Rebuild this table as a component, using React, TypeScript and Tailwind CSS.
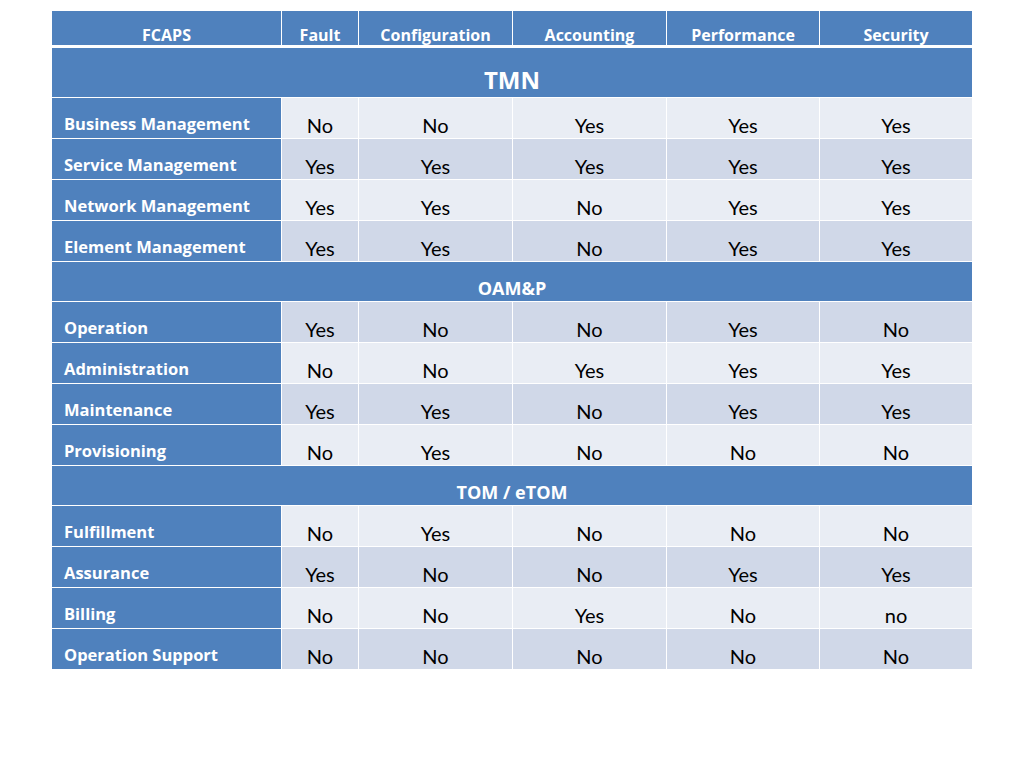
import React from "react";

const cols = ["w-[229px]", "w-[77px]", "w-[154px]", "w-[154px]", "w-[153px]", "w-[153px]"];

type Row = { label: string; vals: string[]; dark: boolean };

const sections: { title: string; titleCls: string; bandCls: string; rows: Row[] }[] = [
  {
    title: "TMN",
    titleCls: "text-[24px] pt-[15px]",
    bandCls: "h-[49px]",
    rows: [
      { label: "Business Management", vals: ["No", "No", "Yes", "Yes", "Yes"], dark: false },
      { label: "Service Management", vals: ["Yes", "Yes", "Yes", "Yes", "Yes"], dark: true },
      { label: "Network Management", vals: ["Yes", "Yes", "No", "Yes", "Yes"], dark: false },
      { label: "Element Management", vals: ["Yes", "Yes", "No", "Yes", "Yes"], dark: true },
    ],
  },
  {
    title: "OAM&P",
    titleCls: "text-[18px] pt-[13px]",
    bandCls: "h-[40px]",
    rows: [
      { label: "Operation", vals: ["Yes", "No", "No", "Yes", "No"], dark: true },
      { label: "Administration", vals: ["No", "No", "Yes", "Yes", "Yes"], dark: false },
      { label: "Maintenance", vals: ["Yes", "Yes", "No", "Yes", "Yes"], dark: true },
      { label: "Provisioning", vals: ["No", "Yes", "No", "No", "No"], dark: false },
    ],
  },
  {
    title: "TOM / eTOM",
    titleCls: "text-[18px] pt-[13px]",
    bandCls: "h-[40px]",
    rows: [
      { label: "Fulfillment", vals: ["No", "Yes", "No", "No", "No"], dark: false },
      { label: "Assurance", vals: ["Yes", "No", "No", "Yes", "Yes"], dark: true },
      { label: "Billing", vals: ["No", "No", "Yes", "No", "no"], dark: false },
      { label: "Operation Support", vals: ["No", "No", "No", "No", "No"], dark: true },
    ],
  },
];

const headers = ["FCAPS", "Fault", "Configuration", "Accounting", "Performance", "Security"];

const bold = { fontFamily: "'Open Sans', Lato, sans-serif" };
const reg = { fontFamily: "Lato, 'Open Sans', sans-serif" };

export default function App() {
  return (
    <div className="w-[1024px] h-[768px] bg-white pt-[11px] pl-[52px]">
      <div className="w-[920px] flex flex-col">
        <div className="flex h-[37px] border-b-[3px] border-white">
          {headers.map((h, i) => (
            <div
              key={h}
              style={bold}
              className={`${cols[i]} bg-[#4f81bd] text-white font-bold text-[16px] flex justify-center items-center pt-[13px] ${
                i > 0 ? "border-l border-white" : ""
              }`}
            >
              {h}
            </div>
          ))}
        </div>
        {sections.map((s) => (
          <React.Fragment key={s.title}>
            <div
              style={bold}
              className={`${s.bandCls} bg-[#4f81bd] text-white font-bold flex justify-center items-center ${s.titleCls} ${
                s.title !== "TMN" ? "border-t border-white" : ""
              }`}
            >
              {s.title}
            </div>
            {s.rows.map((r) => (
              <div key={r.label} className="flex h-[41px] border-t border-white">
                <div
                  style={bold}
                  className={`${cols[0]} bg-[#4f81bd] text-white font-bold text-[16.5px] flex items-center pl-[12px] pt-[13px]`}
                >
                  {r.label}
                </div>
                {r.vals.map((v, i) => (
                  <div
                    key={i}
                    style={reg}
                    className={`${cols[i + 1]} border-l border-white ${
                      r.dark ? "bg-[#d0d8e8]" : "bg-[#e9edf4]"
                    } text-black text-[20px] flex justify-center items-center pt-[13px]`}
                  >
                    {v}
                  </div>
                ))}
              </div>
            ))}
          </React.Fragment>
        ))}
      </div>
    </div>
  );
}
